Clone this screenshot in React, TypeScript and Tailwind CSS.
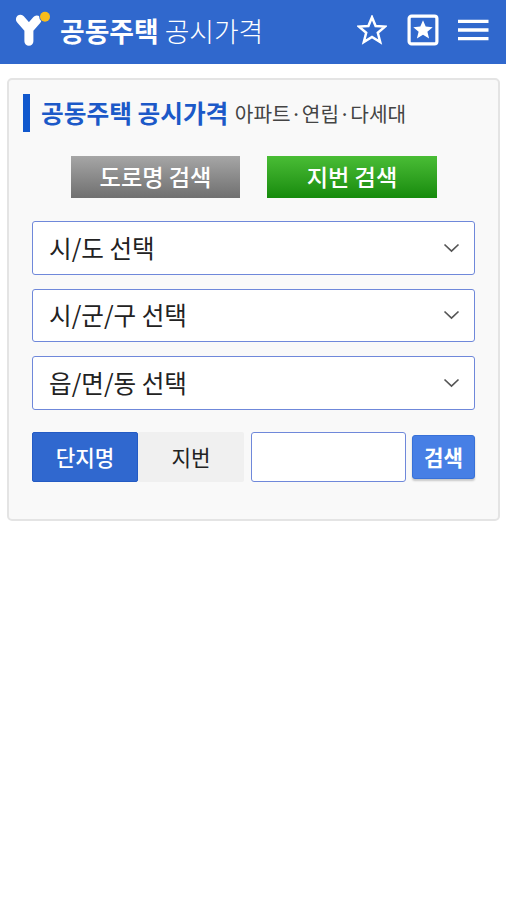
import React, { useState } from 'react';
import clsx from 'clsx';

const SELECTS = ['시/도 선택', '시/군/구 선택', '읍/면/동 선택'];

function Logo() {
  return (
    <svg width="38" height="38" viewBox="0 0 38 38" className="shrink-0">
      <path
        d="M6.4 9.2 L14.9 19 L22.8 10 M14.9 19 V31.2"
        fill="none"
        stroke="#fff"
        strokeWidth="9"
        strokeLinecap="round"
        strokeLinejoin="round"
      />
      <circle cx="31" cy="6.7" r="5.8" fill="#3068cd" />
      <circle cx="31" cy="6.7" r="5" fill="#f9bd1c" />
    </svg>
  );
}

function Header() {
  return (
    <header className="flex h-[63.5px] items-start bg-[#3068cd] pt-[10px] pl-[14px] text-white">
      <Logo />
      <h1 className="ml-[8px] flex h-[42px] w-[220px] gap-[6px] text-[26.8px] leading-[42px] whitespace-nowrap">
        <span className="font-bold">공동주택</span>
        <span className="font-light">공시가격</span>
      </h1>
      <div className="ml-[77px] flex h-[40px] items-center">
        <button className="block">
          <svg width="30" height="30" viewBox="0 0 30 30" className="block">
            <path
              d="M15 2.2 L18.6 11 L28 11.6 L20.8 17.7 L23.2 27 L15 21.9 L6.8 27 L9.2 17.7 L2 11.6 L11.4 11 Z"
              fill="none"
              stroke="#fff"
              strokeWidth="2.5"
              strokeLinejoin="miter"
            />
          </svg>
        </button>
        <button className="ml-[19.5px] block">
          <svg width="32" height="32" viewBox="0 0 32 32" className="block">
            <rect x="2.1" y="2.1" width="27.8" height="27.8" rx="2.5" fill="none" stroke="#fff" strokeWidth="3.2" />
            <path
              d="M16 6.2 L18.7 12.6 L25.7 13.2 L20.4 17.7 L22.1 24.5 L16 20.8 L9.9 24.5 L11.6 17.7 L6.3 13.2 L13.3 12.6 Z"
              fill="#fff"
            />
          </svg>
        </button>
        <button className="ml-[19px] block">
          <svg width="31" height="22" viewBox="0 0 31 22" className="block">
            <path d="M0 2.4 H30.5 M0 11 H30.5 M0 19.6 H30.5" stroke="#fff" strokeWidth="3.3" />
          </svg>
        </button>
      </div>
    </header>
  );
}

function SelectBox({ label }: { label: string }) {
  return (
    <button className="flex h-[53.5px] w-full items-center justify-between rounded-[3px] border border-[#6f88da] bg-white pr-[14px] pl-[16px] text-[24.6px] leading-[50px] text-[#222]">
      <span className="-mt-[2px]">{label}</span>
      <svg width="17" height="10" viewBox="0 0 17 10">
        <path d="M1.5 1.5 L8.5 8 L15.5 1.5" fill="none" stroke="#555" strokeWidth="1.7" />
      </svg>
    </button>
  );
}

export default function App() {
  const [tab, setTab] = useState('단지명');

  return (
    <div className="min-h-screen w-[506px] bg-white font-['Noto_Sans_CJK_KR',sans-serif]">
      <Header />

      <main className="pt-[14.5px] pl-[7px]">
        <section className="h-[443px] w-[493px] rounded-[5px] border-2 border-[#e4e4e4] bg-[#f9f9f9] pt-[14px] pl-[23px]">
          {/* Title */}
          <div className="-ml-[9px] flex h-[38px] items-center">
            <span className="h-[38px] w-[7px] bg-[#1158cd]" />
            <h2 className="-mt-[3px] ml-[11px] text-[24.7px] leading-[38px] font-bold whitespace-nowrap text-[#1c59c8]">공동주택 공시가격</h2>
            <span className="mt-[2px] ml-[6.5px] text-[20.2px] leading-[38px] whitespace-nowrap text-[#444]">아파트·연립·다세대</span>
          </div>

          {/* Search mode */}
          <div className="mt-[24px] flex gap-[27px] pl-[39px] text-[23.2px] leading-[40px] font-medium text-white">
            <button className="h-[42px] w-[169px] bg-linear-to-b from-[#a6a6a6] to-[#707070] pb-[2px]">도로명 검색</button>
            <button className="h-[42px] w-[170px] bg-linear-to-b from-[#49bd35] to-[#158b0b] pb-[2px]">지번 검색</button>
          </div>

          {/* Region */}
          <div className="mt-[23px] flex w-[443px] flex-col gap-[14px]">
            {SELECTS.map((label) => (
              <SelectBox key={label} label={label} />
            ))}
          </div>

          {/* Keyword */}
          <div className="mt-[22.5px] flex w-[443px] items-center text-[21.2px]">
            {['단지명', '지번'].map((name) => (
              <button
                key={name}
                onClick={() => setTab(name)}
                className={clsx(
                  'h-[50px] w-[106px] rounded-[2px]',
                  tab === name ? 'border border-[#245bc4] bg-[#3068cf] leading-[48px] font-medium text-white' : 'bg-[#f0f0f0] leading-[50px] text-[#222]'
                )}
              >
                {name}
              </button>
            ))}
            <input className="ml-[7px] h-[50px] w-[155px] rounded-[3px] border border-[#6f88da] bg-white px-2" />
            <button className="ml-[6px] h-[44px] w-[63px] rounded-[3px] border border-[#3871d8] bg-[#477fe5] leading-[42px] font-bold text-white shadow-[0_2px_2px_rgba(0,0,0,0.2)]">
              검색
            </button>
          </div>
        </section>
      </main>
    </div>
  );
}
